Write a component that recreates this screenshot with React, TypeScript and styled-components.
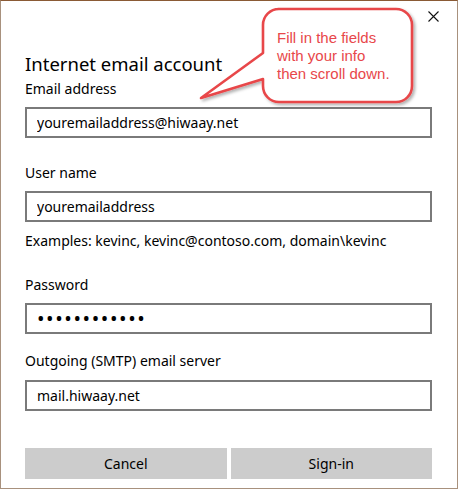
import React from "react";
import styled, { createGlobalStyle } from "styled-components";

const Global = createGlobalStyle`
  html, body { margin: 0; padding: 0; background: #ffffff; }
  * { box-sizing: border-box; }
`;

const Frame = styled.div`
  position: relative;
  width: 458px;
  height: 489px;
  background: #ffffff;
  border: 1px solid #a8917d;
  border-top: 1px solid #8a5a35;
  font-family: "Segoe UI", "Noto Sans", "Open Sans", sans-serif;
  color: #000;
  display: flex;
  flex-direction: column;
`;

const TopBar = styled.div`
  display: flex;
  justify-content: flex-end;
  padding: 10px 18px 0 0;
  height: 21px;
`;

const CloseButton = styled.button`
  width: 11px;
  height: 11px;
  padding: 0;
  border: none;
  background: transparent;
  display: flex;
`;

const Content = styled.div`
  padding: 0 25px 0 24px;
  display: flex;
  flex-direction: column;
`;

const Title = styled.h1`
  margin: 28px 0 0;
  font-size: 18.5px;
  line-height: 28px;
  font-weight: 400;
`;

const Label = styled.div<{ $top: number }>`
  margin-top: ${(p) => p.$top}px;
  font-size: 14px;
  line-height: 20px;
`;

const Field = styled.input<{ $top?: number; $secret?: boolean }>`
  display: block;
  width: 100%;
  height: 31px;
  margin-top: ${(p) => p.$top ?? 8}px;
  border: 2px solid #7a7a7a;
  background: #fff;
  padding: 0 0 0 10px;
  font-family: inherit;
  font-size: ${(p) => (p.$secret ? "20px" : "14px")};
  letter-spacing: ${(p) => (p.$secret ? "1.6px" : "0")};
  color: #000;
  outline: none;
`;

const Hint = styled.div`
  margin-top: 9px;
  font-size: 14px;
  line-height: 20px;
`;

const Buttons = styled.div`
  margin-top: 37px;
  display: grid;
  grid-template-columns: 1fr 1fr;
  gap: 4px;
`;

const Button = styled.button`
  height: 31px;
  border: none;
  background: #cccccc;
  font-family: inherit;
  font-size: 14px;
  color: #000;
`;

const Callout = styled.div`
  position: absolute;
  left: 196px;
  top: 4px;
  width: 222px;
  height: 106px;
`;

const CalloutShape = styled.svg`
  display: block;
  overflow: visible;
`;

const CalloutText = styled.div`
  position: absolute;
  left: 80px;
  top: 24px;
  font-family: "Liberation Sans", Arial, sans-serif;
  font-size: 15px;
  line-height: 18px;
  color: #e8474a;
`;

export default function App() {
  return (
    <>
      <Global />
      <Frame>
        <TopBar>
          <CloseButton aria-label="Close">
            <svg width="11" height="11" viewBox="0 0 11 11">
              <path d="M0.5 0.5 L10.5 10.5 M10.5 0.5 L0.5 10.5" stroke="#111" strokeWidth="1.1" fill="none" />
            </svg>
          </CloseButton>
        </TopBar>
        <Content>
          <Title>Internet email account</Title>
          <Label $top={1}>Email address</Label>
          <Field readOnly value="youremailaddress@hiwaay.net" />
          <Label $top={25}>User name</Label>
          <Field readOnly value="youremailaddress" />
          <Hint>Examples: kevinc, kevinc@contoso.com, domain\kevinc</Hint>
          <Label $top={24}>Password</Label>
          <Field readOnly type="password" $secret value="xxxxxxxxxxxx" />
          <Label $top={17}>Outgoing (SMTP) email server</Label>
          <Field readOnly value="mail.hiwaay.net" $top={9} />
          <Buttons>
            <Button>Cancel</Button>
            <Button>Sign-in</Button>
          </Buttons>
        </Content>
        <Callout>
          <CalloutShape width="222" height="106" viewBox="0 0 222 106">
            <defs>
              <filter id="sh" x="-10%" y="-10%" width="130%" height="130%">
                <feDropShadow dx="2" dy="2" stdDeviation="1.5" floodColor="#000" floodOpacity="0.3" />
              </filter>
            </defs>
            <path
              d="M81 4 H199 A16 16 0 0 1 215 20 V81 A16 16 0 0 1 199 97 H82 A16 16 0 0 1 66 81 V74 L4 93 L66 48 V20 A16 16 0 0 1 82 4 Z"
              fill="#ffffff"
              stroke="#e8474a"
              strokeWidth="2.6"
              strokeLinejoin="round"
              filter="url(#sh)"
            />
          </CalloutShape>
          <CalloutText>
            Fill in the fields
            <br />
            with your info
            <br />
            then scroll down.
          </CalloutText>
        </Callout>
      </Frame>
    </>
  );
}
